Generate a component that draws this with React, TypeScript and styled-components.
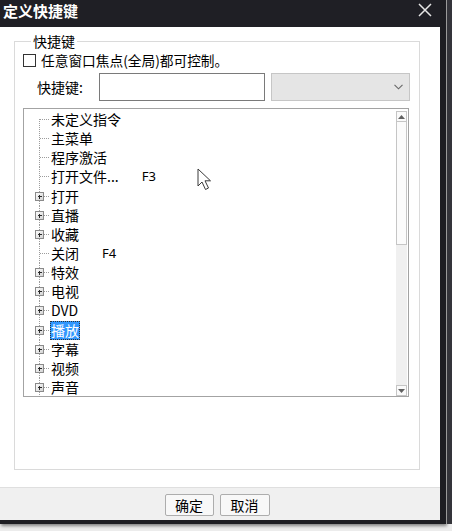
import React from 'react';
import styled, { createGlobalStyle } from 'styled-components';

const Global = createGlobalStyle`
  html, body { margin: 0; padding: 0; }
  body {
    background: #ececec;
    font-family: "Noto Sans CJK SC", "Noto Sans", sans-serif;
    color: #000;
  }
`;

const Screen = styled.div`
  display: flex;
  width: 452px;
  height: 531px;
  overflow: hidden;
`;

const Win = styled.div`
  width: 440px;
  height: 520px;
  display: flex;
  flex-direction: column;
  border-right: 6px solid #1d1d22;
  border-bottom: 4px solid #1d1d22;
  box-shadow: 1px 2px 3px rgba(0, 0, 0, 0.45);
  flex-shrink: 0;
`;

const SideStrip = styled.div`
  width: 6px;
  height: 524px;
  background: #34343a;
  border-left: 1px solid #9a9a9a;
`;

const TitleBar = styled.div`
  height: 27px;
  background: #1f1f25;
  display: flex;
  align-items: center;
  justify-content: space-between;
  padding: 0 8px 0 3px;
  color: #fff;
`;

const Title = styled.span`
  font-size: 15px;
  font-weight: 700;
  line-height: 20px;
  margin-top: -6px;
`;

const Close = styled.svg`
  width: 14px;
  height: 14px;
  margin-top: -7px;
`;

const Body = styled.div`
  flex: 1;
  background: #fff;
  padding: 7px 20px 17px 14px;
  display: flex;
  flex-direction: column;
`;

const Group = styled.fieldset`
  flex: 1;
  margin: 0;
  border: 1px solid #dadada;
  padding: 3px 9px 0 8px;
  display: flex;
  flex-direction: column;
  min-width: 0;
`;

const Legend = styled.legend`
  font-size: 14px;
  line-height: 14px;
  padding: 0 2px;
  margin-left: 8px;
`;

const CheckRow = styled.label`
  display: flex;
  align-items: center;
  height: 18px;
  font-size: 13.7px;
  gap: 5px;
`;

const CheckBox = styled.span`
  width: 11px;
  height: 11px;
  border: 1px solid #333;
  background: #fff;
`;

const KeyRow = styled.div`
  display: flex;
  align-items: center;
  margin-top: 4px;
  padding-left: 14px;
  gap: 6px;
`;

const KeyLabel = styled.span`
  width: 56px;
  flex-shrink: 0;
  font-size: 14px;
`;

const TextBox = styled.div`
  width: 166px;
  height: 28px;
  box-sizing: border-box;
  flex-shrink: 0;
  border: 1px solid #7a7a7a;
  background: #fff;
`;

const Select = styled.div`
  width: 139px;
  height: 28px;
  box-sizing: border-box;
  flex-shrink: 0;
  border: 1px solid #c6c6c6;
  background: #e5e5e5;
  display: flex;
  align-items: center;
  justify-content: flex-end;
  padding-right: 6px;
`;

const Chevron = styled.svg`
  width: 9px;
  height: 6px;
`;

const Tree = styled.div`
  position: relative;
  margin-top: 7px;
  width: 384px;
  height: 287px;
  border: 1px solid #a3a3a3;
  display: flex;
  background: #fff;
`;

const TreeList = styled.div`
  flex: 1;
  padding-top: 1px;
  display: flex;
  flex-direction: column;
`;

const Row = styled.div`
  display: flex;
  align-items: center;
  height: 19.15px;
  font-size: 14px;
  line-height: 19px;
  white-space: nowrap;
`;

const Connector = styled.svg`
  width: 26px;
  height: 19.15px;
  flex-shrink: 0;
`;

const Label = styled.span<{ $selected?: boolean }>`
  padding: 0 1px;
  height: 19px;
  box-sizing: border-box;
  background: ${(p) => (p.$selected ? '#3297fd' : 'transparent')};
  color: ${(p) => (p.$selected ? '#fff' : '#000')};
  outline: ${(p) => (p.$selected ? '1px dotted #333' : 'none')};
  outline-offset: -1px;
`;

const Accel = styled.span`
  margin-left: 22px;
  font-family: "Noto Sans", "Noto Sans CJK SC", sans-serif;
  font-size: 13px;
`;

const ScrollBar = styled.div`
  width: 11px;
  margin: 2px 1px 0 0;
  display: flex;
  flex-direction: column;
  background: #f0f0f0;
`;

const ScrollBtn = styled.div`
  height: 11px;
  border: 1px solid #c5c5c5;
  background: #fafafa;
  display: flex;
  align-items: center;
  justify-content: center;
  box-sizing: border-box;
`;

const Thumb = styled.div`
  height: 123px;
  border: 1px solid #c5c5c5;
  border-top: none;
  background: #fbfbfb;
  box-sizing: border-box;
`;

const Track = styled.div`
  flex: 1;
`;

const Cursor = styled.svg`
  position: absolute;
  left: 173px;
  top: 59px;
  width: 17px;
  height: 23px;
`;

const Footer = styled.div`
  height: 32px;
  background: #f0f0f0;
  border-top: 1px solid #dfdfdf;
  display: flex;
  align-items: center;
  justify-content: center;
  gap: 6px;
  padding-right: 6px;
`;

const Button = styled.div<{ $w: number }>`
  width: ${(p) => p.$w}px;
  height: 20px;
  border: 1px solid #adadad;
  border-radius: 2px;
  background: #f8f8f8;
  font-size: 14px;
  line-height: 20px;
  text-align: center;
  margin-top: 2px;
`;

type Item = { label: string; branch?: boolean; accel?: string; selected?: boolean };

const items: Item[] = [
  { label: '未定义指令' },
  { label: '主菜单' },
  { label: '程序激活' },
  { label: '打开文件...', accel: 'F3' },
  { label: '打开', branch: true },
  { label: '直播', branch: true },
  { label: '收藏', branch: true },
  { label: '关闭', accel: 'F4' },
  { label: '特效', branch: true },
  { label: '电视', branch: true },
  { label: 'DVD', branch: true },
  { label: '播放', branch: true, selected: true },
  { label: '字幕', branch: true },
  { label: '视频', branch: true },
  { label: '声音', branch: true },
];

const TreeLines: React.FC<{ branch?: boolean; first?: boolean }> = ({ branch, first }) => (
  <Connector viewBox="0 0 26 19" shapeRendering="crispEdges">
    <line x1="15.5" y1={first ? 9 : 0} x2="15.5" y2="19" stroke="#9c9c9c" strokeDasharray="1 1" />
    <line x1="16" y1="9.5" x2="26" y2="9.5" stroke="#9c9c9c" strokeDasharray="1 1" />
    {branch && (
      <g>
        <defs>
          <linearGradient id="pb" x1="0" y1="0" x2="1" y2="1">
            <stop offset="0" stopColor="#ffffff" />
            <stop offset="1" stopColor="#d0d0d0" />
          </linearGradient>
        </defs>
        <rect x="11.5" y="5.5" width="8" height="8" fill="url(#pb)" stroke="#8a8a8a" />
        <line x1="13.5" y1="9.5" x2="17.5" y2="9.5" stroke="#2b2b2b" />
        <line x1="15.5" y1="7.5" x2="15.5" y2="11.5" stroke="#2b2b2b" />
      </g>
    )}
  </Connector>
);

export default function App() {
  return (
    <>
      <Global />
      <Screen>
        <Win>
          <TitleBar>
            <Title>定义快捷键</Title>
            <Close viewBox="0 0 14 14">
              <path d="M1 1 L13 13 M13 1 L1 13" stroke="#e6e6e6" strokeWidth="1.5" />
            </Close>
          </TitleBar>
          <Body>
            <Group>
              <Legend>快捷键</Legend>
              <CheckRow>
                <CheckBox />
                任意窗口焦点(全局)都可控制。
              </CheckRow>
              <KeyRow>
                <KeyLabel>快捷键:</KeyLabel>
                <TextBox />
                <Select>
                  <Chevron viewBox="0 0 9 6">
                    <path d="M0.5 0.8 L4.5 4.8 L8.5 0.8" fill="none" stroke="#666" strokeWidth="1.1" />
                  </Chevron>
                </Select>
              </KeyRow>
              <Tree>
                <TreeList>
                  {items.map((it, i) => (
                    <Row key={i}>
                      <TreeLines branch={it.branch} first={i === 0} />
                      <Label $selected={it.selected}>{it.label}</Label>
                      {it.accel && <Accel>{it.accel}</Accel>}
                    </Row>
                  ))}
                </TreeList>
                <ScrollBar>
                  <ScrollBtn>
                    <svg width="7" height="4" viewBox="0 0 7 4">
                      <path d="M0 4 L3.5 0 L7 4 Z" fill="#606060" />
                    </svg>
                  </ScrollBtn>
                  <Thumb />
                  <Track />
                  <ScrollBtn>
                    <svg width="7" height="4" viewBox="0 0 7 4">
                      <path d="M0 0 L3.5 4 L7 0 Z" fill="#606060" />
                    </svg>
                  </ScrollBtn>
                </ScrollBar>
                <Cursor viewBox="0 0 17 23">
                  <path
                    d="M1 1 L1 18 L5 14 L8.5 21.5 L11.5 20 L8 12.8 L13.5 12.8 Z"
                    fill="#fff"
                    stroke="#3a3a3a"
                    strokeWidth="1"
                    strokeLinejoin="round"
                  />
                </Cursor>
              </Tree>
            </Group>
          </Body>
          <Footer>
            <Button $w={47}>确定</Button>
            <Button $w={48}>取消</Button>
          </Footer>
        </Win>
        <SideStrip />
      </Screen>
    </>
  );
}
